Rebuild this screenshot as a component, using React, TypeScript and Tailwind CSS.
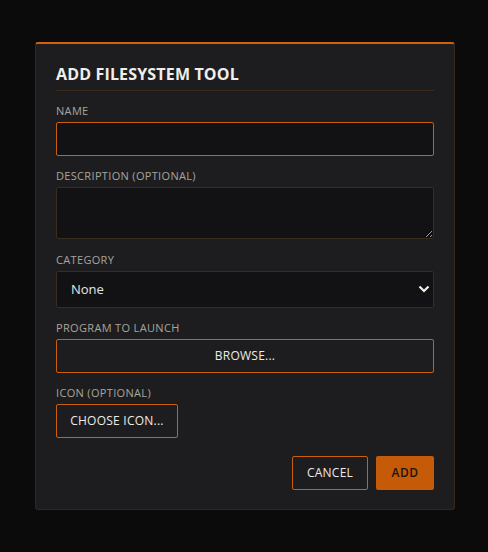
import { useState } from "react";

const label = "block text-[11px] leading-4 uppercase tracking-[0.03em] text-[#a9a49d] mb-[3px]";
const field =
  "w-full bg-[#121214] text-[#e8e6e3] text-[13px] px-3.5 rounded-[2px] outline-none";

export default function App() {
  const [name, setName] = useState("");
  const [desc, setDesc] = useState("");
  const [category, setCategory] = useState("none");

  return (
    <div
      className="min-h-[552px] w-full bg-[#0b0b0b] flex pl-[35px] pt-[42px]"
      style={{ fontFamily: '"Open Sans", "Noto Sans", sans-serif' }}
    >
      <div className="w-[420px] h-[468px] bg-[#1d1d1f] border border-[#33271c] border-t-2 border-t-[#d0620e] rounded-[3px] px-5 pt-[19px]">
        <h2 className="text-[16px] font-bold text-[#f0eeea] tracking-[0.01em] leading-[22px] pb-[5px] border-b border-[#3a2a1c]">
          ADD FILESYSTEM TOOL
        </h2>

        <div className="mt-[12px]">
          <label className={label}>Name</label>
          <input
            value={name}
            onChange={(e) => setName(e.target.value)}
            className={field + " h-[34px] border border-[#c8600f]"}
          />
        </div>

        <div className="mt-[12px]">
          <label className={label}>Description (optional)</label>
          <textarea
            value={desc}
            onChange={(e) => setDesc(e.target.value)}
            className={field + " h-[52px] py-2 border border-[#3a2c1f] block resize-y"}
          />
        </div>

        <div className="mt-[13px]">
          <label className={label}>Category</label>
          <div className="relative">
            <select
              value={category}
              onChange={(e) => setCategory(e.target.value)}
              className={field + " h-[37px] border border-[#3a2c1f] appearance-none"}
            >
              <option value="none">None</option>
            </select>
            <svg
              className="absolute right-[4px] top-[14px] pointer-events-none"
              width="12"
              height="8"
              viewBox="0 0 12 8"
            >
              <path d="M1.5 1.5 L6 6 L10.5 1.5" fill="none" stroke="#f2ede6" strokeWidth="2.2" />
            </svg>
          </div>
        </div>

        <div className="mt-[12px]">
          <label className={label}>Program to launch</label>
          <button className="w-full h-[34px] border border-[#c8600f] rounded-[2px] text-[12px] text-[#eeeae5] tracking-[0.02em]">
            BROWSE...
          </button>
        </div>

        <div className="mt-[12px]">
          <label className={label}>Icon (optional)</label>
          <button className="block w-[122px] h-[34px] border border-[#c8600f] rounded-[2px] text-[12px] text-[#eeeae5] tracking-[0.02em]">
            CHOOSE ICON...
          </button>
        </div>

        <div className="flex justify-end gap-2 mt-[18px]">
          <button className="h-[34px] w-[76px] border border-[#c8600f] rounded-[2px] text-[12px] text-[#eeeae5] tracking-[0.02em]">
            CANCEL
          </button>
          <button className="h-[34px] w-[58px] bg-[#c55a09] rounded-[2px] text-[12px] font-semibold text-[#1a1410] tracking-[0.04em]">
            ADD
          </button>
        </div>
      </div>
    </div>
  );
}
